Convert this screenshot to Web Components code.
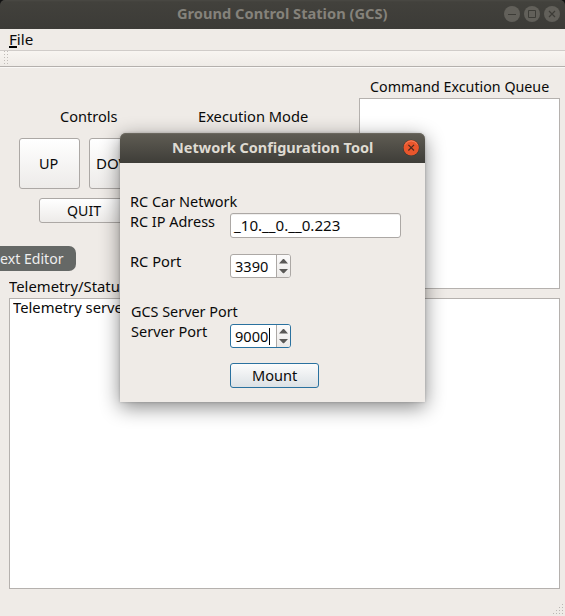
<!DOCTYPE html>
<html lang="en"><head><meta charset="utf-8"><title>Ground Control Station (GCS)</title>
<style>html,body{margin:0;height:100%;overflow:hidden;background:#efebe7;font:14.6px/20px "Noto Sans","Open Sans",sans-serif;color:#0a0a0a}</style></head>
<body><gcs-desktop></gcs-desktop>
<script>
const define=(name,html,setup)=>customElements.define(name,class extends HTMLElement{
  connectedCallback(){
    if(this.shadowRoot)return;
    const root=this.attachShadow({mode:'open'});
    root.innerHTML=html;
    if(setup)setup(this,root);
  }
});
const pen=document.createElement('canvas').getContext('2d');

// A label whose visible glyphs span exactly the width given by "w".
define('ui-label',`<style>:host{display:block;height:20px;flex:none;white-space:pre}
span{display:block;width:max-content;transform-origin:0 0}</style><span><slot></slot></span>`,(el,root)=>{
  const cs=getComputedStyle(el);
  pen.font=`${cs.fontWeight} ${cs.fontSize} ${cs.fontFamily}`;
  const m=pen.measureText(el.textContent),w=+el.getAttribute('w');
  const s=w/(m.actualBoundingBoxLeft+m.actualBoundingBoxRight);
  el.style.width=w+'px';
  root.querySelector('span').style.transform=`translateX(${m.actualBoundingBoxLeft*s}px) scaleX(${s})`;
});

define('ui-button',`<style>:host{display:flex;box-sizing:border-box;width:89px;height:25px;padding-bottom:2px;align-items:center;justify-content:center;border:1px solid #aca8a5;border-radius:3px;background:linear-gradient(#fff,#edebe9)}
:host([default]){border-color:#2a719f;background:linear-gradient(#fcfcfc,#dce1e5)}
:host([square]){width:61px;height:51px}</style><slot></slot>`);

define('ui-field',`<style>:host{display:flex;box-sizing:border-box;width:171px;height:25px;padding:1px 0 0 2px;border:1px solid #aca8a5;border-radius:3px;background:#fff;box-shadow:inset 0 1px #f0efee}</style><slot></slot>`);

define('ui-spin',`<style>:host{display:flex;box-sizing:border-box;width:61px;height:24px;border:1px solid #aca8a5;border-radius:3px;background:#fff;overflow:hidden}
:host([focused]){border-color:#2a719f}
.value{display:flex;flex:1;padding:1px 0 0 4px}
.caret{display:none;width:1px;height:17px;margin:2px 0 0 1px;background:#000}
:host([focused]) .caret{display:block}
svg{display:block;width:13px;height:22px;background:linear-gradient(#fbfafa,#eceae8);border-left:1px solid #aca8a5}</style>
<div class="value"><slot></slot><i class="caret"></i></div>
<svg viewBox="0 0 13 22"><path d="M2 8.4L6 4h1l4 4.4zM2 14.1L6 18.2h1l4-4.1z" fill="#5a5957"/></svg>`);

define('ui-listbox',`<style>:host{display:block;box-sizing:border-box;border:1px solid #b5b1ae;background:#fff;padding:0 3px}::slotted(ui-label){margin-top:-2px}</style><slot></slot>`);

define('window-buttons',`<style>:host{display:flex;gap:4px}svg{display:block}</style>
<svg width="16" height="16"><circle cx="8" cy="8" r="8" fill="#62605a"/><path d="M4 8.5h8" stroke="#3d3c37"/></svg>
<svg width="16" height="16"><circle cx="8" cy="8" r="8" fill="#62605a"/><path d="M4.5 4.5h7v7h-7z" fill="none" stroke="#3d3c37"/></svg>
<svg width="16" height="16"><circle cx="8" cy="8" r="8" fill="#62605a"/><path d="M5 5l6 6M11 5l-6 6" stroke="#3d3c37" stroke-width="1.2"/></svg>`);

define('gcs-main',`<style>
:host{display:flex;flex-direction:column;height:616px;width:565px;position:relative;background:#efebe7}
header{display:flex;height:29px;box-sizing:border-box;padding:3px 5px 0 177px;justify-content:space-between;background:linear-gradient(#4a4944 0,#42413c 2px,#3c3b37);color:#85827b;font-weight:700;border-radius:5px 5px 0 0}
window-buttons{margin-top:3px}
.top{background:#111}
nav{height:21px;padding:0 0 0 10px;box-sizing:border-box;position:relative}
nav u{display:block;width:8px;height:2px;background:#000;position:absolute;left:9px;top:17px}
.toolbar{height:15px;border-top:1px solid #d0ccc9;border-bottom:1px solid #b4b0ad;background:linear-gradient(#f8f5f1,#efebe7);box-shadow:0 1px #faf8f6}
.toolbar svg{display:block}
.upper{display:grid;grid-template-columns:359px 201px;height:222px}
.controls{padding-top:39px}
.titles{display:flex;gap:82px;padding-left:59.5px}
.row{display:flex;gap:9px;padding:12px 0 9px 19px}
.quit{padding-left:39px}
.queue{padding-top:9px}
.queue ui-label{margin-left:10.5px}
.queue ui-listbox{height:191px;margin-top:2px}
.status{padding:8px 5px 0 9px;margin-top:-21px}
.status ui-listbox{height:291px;margin-top:2px}
.grip{position:absolute;right:0;bottom:0}
</style>
<div class="top"><header><ui-label w="210.5">Ground Control Station (GCS)</ui-label><window-buttons></window-buttons></header></div>
<nav><ui-label w="23">File</ui-label><u></u></nav>
<div class="toolbar"><svg width="12" height="15" fill="#c0bcb8"><g id="dots"></g></svg></div>
<div class="upper"><div class="controls"><div class="titles"><ui-label w="57.5">Controls</ui-label><ui-label w="109">Execution Mode</ui-label></div>
<div class="row"><ui-button square><ui-label w="18.5">UP</ui-label></ui-button><ui-button square><ui-label w="46">DOWN</ui-label></ui-button></div>
<div class="quit"><ui-button><ui-label w="34">QUIT</ui-label></ui-button></div></div>
<div class="queue"><ui-label w="179">Command Excution Queue</ui-label><ui-listbox></ui-listbox></div></div>
<div class="status"><ui-label w="118">Telemetry/Status</ui-label><ui-listbox><ui-label w="116">Telemetry server</ui-label></ui-listbox></div>
<svg class="grip" width="12" height="14" fill="#bbb7b3"><path d="M9 2h1v1H9zM6 5h1v1H6zM9 5h1v1H9zM3 8h1v1H3zM6 8h1v1H6zM9 8h1v1H9zM0 11h1v1H0zM3 11h1v1H3zM6 11h1v1H6zM9 11h1v1H9z"/></svg>`,(el,root)=>{
  let s='';for(let y=0;y<15;y+=3)s+=`<rect x="4" y="${y}" width="1" height="1"/><rect x="7" y="${y}" width="1" height="1"/>`;
  root.getElementById('dots').innerHTML=s;
});

define('network-dialog',`<style>
:host{display:block;width:305px;height:269px;border-radius:6px 6px 0 0;background:#efebe7;box-shadow:0 5px 20px rgba(0,0,0,.48),0 0 3px rgba(0,0,0,.2)}
header{display:flex;box-sizing:border-box;height:30px;padding:4px 5px 0 52.5px;justify-content:space-between;border-radius:6px 6px 0 0;background:linear-gradient(#605d54,#3e3d38);box-shadow:inset 0 1px #6b685f;color:#dfdbd2;font-weight:700}
header svg{display:block;margin-top:2px}
.form{padding:28px 0 0 10.5px;display:flex;flex-direction:column}
.line{display:grid;grid-template-columns:99.5px auto;align-items:start}
.ip{height:40px}.port{height:50px}.server{height:40px}
.ip ui-field,.port ui-spin,.server ui-spin{margin-top:2px}
.port ui-spin,.server ui-spin{margin-top:3px}
.mount{padding:2px 0 0 99.5px}
</style>
<header><ui-label w="200">Network Configuration Tool</ui-label>
<svg width="17" height="18"><circle cx="8.2" cy="8.9" r="8.2" fill="#383731"/><circle cx="8.2" cy="8.7" r="7.7" fill="#e9562c"/><path d="M2 5.7a7 7 0 0 1 12.4 0" fill="none" stroke="#f2805c"/><path d="M5.4 5.9l5.6 5.6M11 5.9l-5.6 5.6" stroke="#4b2a1e" stroke-width="1.2"/></svg></header>
<div class="form"><ui-label w="106.5">RC Car Network</ui-label>
<div class="line ip"><ui-label w="84">RC IP Adress</ui-label><ui-field><ui-label w="107">_10.__0.__0.223</ui-label></ui-field></div>
<div class="line port"><ui-label w="50">RC Port</ui-label><ui-spin><ui-label w="33">3390</ui-label></ui-spin></div>
<ui-label w="106.5">GCS Server Port</ui-label>
<div class="line server"><ui-label w="76">Server Port</ui-label><ui-spin focused><ui-label w="33">9000</ui-label></ui-spin></div>
<div class="mount"><ui-button default><ui-label w="44">Mount</ui-label></ui-button></div></div>`);

define('launcher-tip',`<style>:host{display:flex;justify-content:flex-end;box-sizing:border-box;width:76px;height:25px;padding:2px 12.5px 0 0;border-radius:0 7px 7px 0;background:#656866;color:#eee}</style><slot></slot>`);

define('gcs-desktop',`<style>:host{display:block;position:relative;width:565px;height:616px;overflow:hidden}
network-dialog{position:absolute;left:120px;top:133px}
launcher-tip{position:absolute;left:0;top:246px}</style>
<gcs-main></gcs-main><launcher-tip><ui-label w="63.5">ext Editor</ui-label></launcher-tip><network-dialog></network-dialog>`);
</script></body></html>
